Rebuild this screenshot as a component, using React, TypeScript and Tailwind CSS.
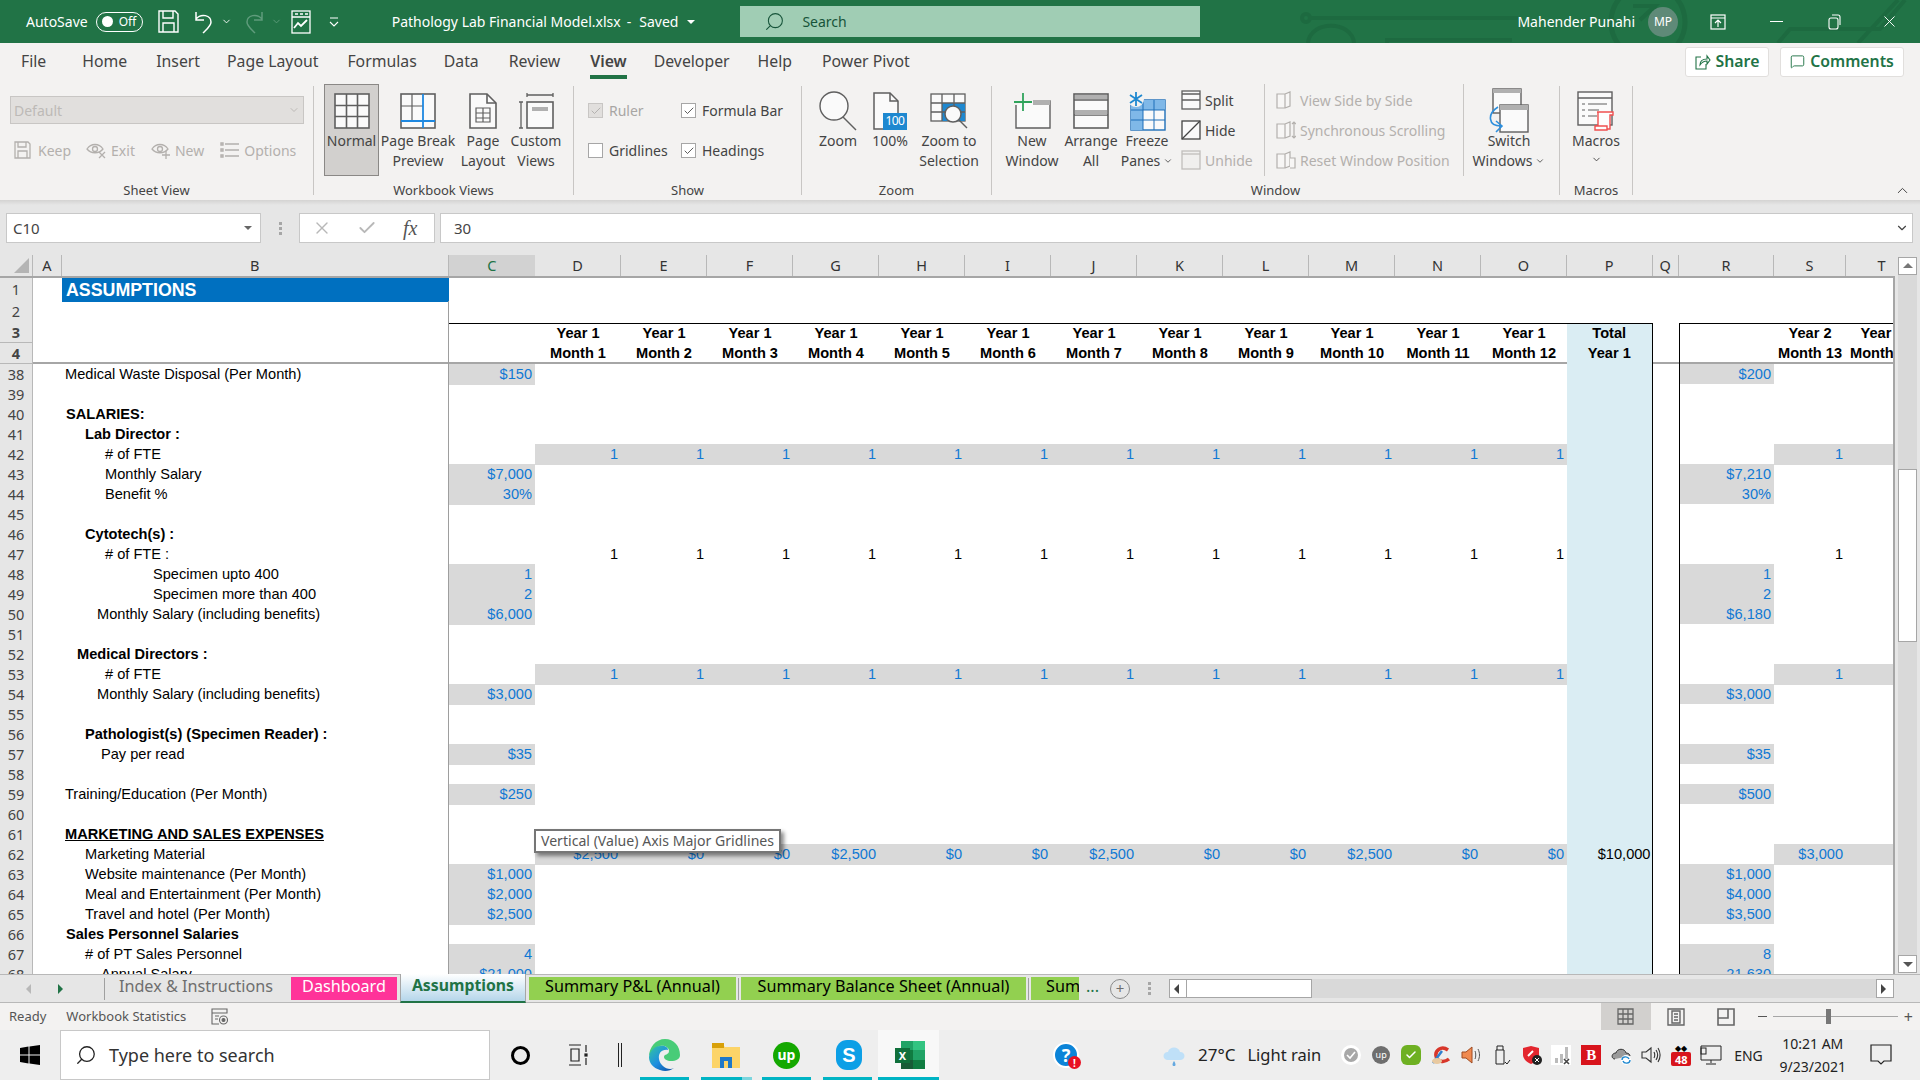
import { ChevronDown, ChevronUp, Search, X, Check, MessageSquare } from "lucide-react";
import type { ReactNode } from "react";

type MonthKind = "blue" | "black" | "money";

interface SheetRow {
  n: number;
  b?: string;
  pl?: string;
  bold?: boolean;
  under?: boolean;
  c?: string;
  r?: string;
  m?: MonthKind;
  p?: string;
  s?: string;
}

const GRID_COLS =
  "grid-cols-[33px_29px_386.5px_86.5px_repeat(12,86px)_85.5px_26.5px_95px_72px_72px]";
const BLUE = "text-[#0f78d4]";
const SHADE = "bg-[#d9d9d9]";
const MONEY = ["$2,500", "$0", "$0", "$2,500", "$0", "$0", "$2,500", "$0", "$0", "$2,500", "$0", "$0"];
const MONTH_COLS = ["D", "E", "F", "G", "H", "I", "J", "K", "L", "M", "N", "O"];

const rows: SheetRow[] = [
  { n: 38, b: "Medical Waste Disposal (Per Month)", pl: "pl-[3px]", c: "$150", r: "$200" },
  { n: 39 },
  { n: 40, b: "SALARIES:", pl: "pl-[4px]", bold: true },
  { n: 41, b: "Lab Director :", pl: "pl-[23px]", bold: true },
  { n: 42, b: "# of FTE", pl: "pl-[43px]", m: "blue", s: "1" },
  { n: 43, b: "Monthly Salary", pl: "pl-[43px]", c: "$7,000", r: "$7,210" },
  { n: 44, b: "Benefit %", pl: "pl-[43px]", c: "30%", r: "30%" },
  { n: 45 },
  { n: 46, b: "Cytotech(s) :", pl: "pl-[23px]", bold: true },
  { n: 47, b: "# of FTE :", pl: "pl-[43px]", m: "black", s: "1" },
  { n: 48, b: "Specimen upto 400", pl: "pl-[91px]", c: "1", r: "1" },
  { n: 49, b: "Specimen more than 400", pl: "pl-[91px]", c: "2", r: "2" },
  { n: 50, b: "Monthly Salary (including benefits)", pl: "pl-[35px]", c: "$6,000", r: "$6,180" },
  { n: 51 },
  { n: 52, b: "Medical Directors :", pl: "pl-[15px]", bold: true },
  { n: 53, b: "# of FTE", pl: "pl-[43px]", m: "blue", s: "1" },
  { n: 54, b: "Monthly Salary (including benefits)", pl: "pl-[35px]", c: "$3,000", r: "$3,000" },
  { n: 55 },
  { n: 56, b: "Pathologist(s) (Specimen Reader) :", pl: "pl-[23px]", bold: true },
  { n: 57, b: "Pay per read", pl: "pl-[39px]", c: "$35", r: "$35" },
  { n: 58 },
  { n: 59, b: "Training/Education (Per Month)", pl: "pl-[3px]", c: "$250", r: "$500" },
  { n: 60 },
  { n: 61, b: "MARKETING AND SALES EXPENSES", pl: "pl-[3px]", bold: true, under: true },
  { n: 62, b: "Marketing Material", pl: "pl-[23px]", m: "money", p: "$10,000", s: "$3,000" },
  { n: 63, b: "Website maintenance (Per Month)", pl: "pl-[23px]", c: "$1,000", r: "$1,000" },
  { n: 64, b: "Meal and Entertainment (Per Month)", pl: "pl-[23px]", c: "$2,000", r: "$4,000" },
  { n: 65, b: "Travel and hotel (Per Month)", pl: "pl-[23px]", c: "$2,500", r: "$3,500" },
  { n: 66, b: "Sales Personnel Salaries", pl: "pl-[4px]", bold: true },
  { n: 67, b: "# of PT Sales Personnel", pl: "pl-[23px]", c: "4", r: "8" },
  { n: 68, b: "Annual Salary", pl: "pl-[39px]", c: "$21,000", r: "21,630" },
];

function RowHead({ n }: { n: number }) {
  return (
    <div className="flex items-center justify-center border-r border-b border-[#b8b8b8] bg-[#e6e6e6] font-['Noto_Sans',sans-serif] text-[14.5px] text-[#444]">
      {n}
    </div>
  );
}

function Value({ v, shade, color = BLUE }: { v?: string; shade?: boolean; color?: string }) {
  return (
    <div className={`whitespace-nowrap pr-[3px] text-right ${color} ${shade ? SHADE : ""}`}>{v}</div>
  );
}

function DataRow({ row }: { row: SheetRow }) {
  const shaded = row.m === "blue" || row.m === "money";
  const months = row.m === "money" ? MONEY : row.m ? MONTH_COLS.map(() => "1") : MONTH_COLS.map(() => "");
  const monthColor = row.m === "black" ? "text-black" : BLUE;
  return (
    <div className={`grid h-[20px] ${GRID_COLS} text-[14.6px] leading-[20px] text-black`}>
      <RowHead n={row.n} />
      <div />
      <div
        className={`whitespace-nowrap border-r border-[#9e9e9e] ${row.pl ?? ""} ${row.bold ? "font-bold" : ""} ${row.under ? "underline" : ""}`}
      >
        {row.b}
      </div>
      <Value v={row.c} shade={!!row.c} />
      {months.map((v, i) => (
        <Value key={MONTH_COLS[i]} v={v} shade={shaded} color={monthColor} />
      ))}
      <div className="whitespace-nowrap border-r border-black bg-[#daedf3] pr-[1px] text-right">{row.p}</div>
      <div />
      <div className="border-l border-black">
        <Value v={row.r} shade={!!row.r} />
      </div>
      <Value v={row.s} shade={shaded} color={monthColor} />
      <div className={shaded ? SHADE : ""} />
    </div>
  );
}

function HeaderBand({ n, h, top, year, month }: { n: number; h: string; top?: boolean; year?: boolean; month?: boolean }) {
  const bar = top ? "border-t border-black" : "";
  const label = year ? "Year" : month ? "Month" : "";
  return (
    <div className={`grid ${h} ${GRID_COLS} text-[14.6px] font-bold ${top ? "leading-[19px]" : "leading-[20px]"} text-black`}>
      <RowHead n={n} />
      <div />
      <div className="border-r border-[#9e9e9e]" />
      <div className={bar} />
      {MONTH_COLS.map((col, i) => (
        <div key={col} className={`whitespace-nowrap text-center ${bar}`}>
          {label && `${label} ${year ? 1 : i + 1}`}
        </div>
      ))}
      <div className={`border-r border-black bg-[#daedf3] text-center ${bar}`}>{year ? "Total" : month ? "Year 1" : ""}</div>
      <div />
      <div className={`border-l border-black ${bar}`} />
      <div className={`whitespace-nowrap text-center ${bar}`}>{label && `${label} ${year ? 2 : 13}`}</div>
      <div className={`whitespace-nowrap text-center ${bar}`}>{label && `${label} ${year ? 2 : 14}`}</div>
    </div>
  );
}

function Sheet() {
  return (
    <div className="relative h-[696px] w-[1895px] overflow-hidden border-r-2 border-[#a6a6a6] bg-white font-['Liberation_Sans',Arial,sans-serif]">
      <div className="h-[86px] border-b-2 border-[#a6a6a6]">
        <div className={`grid h-[23px] ${GRID_COLS} text-black`}>
          <RowHead n={1} />
          <div />
          <div className="whitespace-nowrap bg-[#0070c0] pl-[4px] text-[17.8px] font-bold leading-[24px] text-white">ASSUMPTIONS</div>
        </div>
        <div className={`grid h-[22px] ${GRID_COLS}`}>
          <RowHead n={2} />
          <div />
          <div className="border-r border-[#9e9e9e]" />
        </div>
        <HeaderBand n={3} h="h-[20px]" top year />
        <HeaderBand n={4} h="h-[19px]" month />
      </div>
      {rows.map((row) => (
        <DataRow key={row.n} row={row} />
      ))}
      <div className="absolute left-[534px] top-[551px] whitespace-nowrap border-2 border-[#767676] bg-white px-[5px] font-['Noto_Sans',sans-serif] text-[14.1px] leading-[20px] text-[#575757] shadow-[3px_3px_4px_rgba(0,0,0,0.45)]">
        Vertical (Value) Axis Major Gridlines
      </div>
    </div>
  );
}

function ColumnHeaders() {
  const cols: [string, string][] = [
    ["A", "w-[29px]"],
    ["B", "w-[386.5px]"],
    ["C", "w-[86.5px]"],
    ...MONTH_COLS.map((c): [string, string] => [c, "w-[86px]"]),
    ["P", "w-[85.5px]"],
    ["Q", "w-[26.5px]"],
    ["R", "w-[95px]"],
    ["S", "w-[72px]"],
    ["T", "w-[72px]"],
  ];
  return (
    <div className="flex h-[23px] w-[1895px] overflow-hidden border-b-2 border-[#a6a6a6] bg-[#e6e6e6] text-[14.5px] text-[#333]">
      <div className="flex w-[33px] shrink-0 items-end justify-end border-r border-[#b8b8b8] pb-[3px] pr-[3px]">
        <svg width="15" height="15" viewBox="0 0 15 15"><path d="M15 0V15H0Z" fill="#b4b4b4" /></svg>
      </div>
      {cols.map(([c, w]) =>
        c === "C" ? (
          <div key={c} className={`-mb-[2px] flex shrink-0 items-center justify-center border-b-2 border-[#217346] bg-[#d2d2d2] text-[#217346] ${w}`}>
            {c}
          </div>
        ) : (
          <div key={c} className={`flex shrink-0 items-center justify-center border-r border-[#b8b8b8] ${w}`}>
            {c}
          </div>
        ),
      )}
    </div>
  );
}

function Tri({ dir, color = "#444" }: { dir: "l" | "r" | "u" | "d"; color?: string }) {
  const d = { l: "M7 1V11L2 6Z", r: "M2 1V11L7 6Z", u: "M1 8H11L6 3Z", d: "M1 4H11L6 9Z" }[dir];
  return (
    <svg width="12" height="12" viewBox="0 0 12 12"><path d={d} fill={color} /></svg>
  );
}

function VScroll() {
  return (
    <div className="flex h-[719px] w-[25px] flex-col bg-[#e6e6e6] pl-[3px] pt-[2px]">
      <div className="flex h-[18px] w-[19px] items-center justify-center border border-[#a6a6a6] bg-white">
        <Tri dir="u" color="#777" />
      </div>
      <div className="flex h-[680px] w-[19px] flex-col bg-[#d9d9d9] pt-[194px]">
        <div className="h-[173px] border border-[#a6a6a6] bg-white" />
      </div>
      <div className="flex h-[18px] w-[19px] items-center justify-center border border-[#a6a6a6] bg-white">
        <Tri dir="d" color="#555" />
      </div>
    </div>
  );
}

function TitleIcons() {
  return (
    <>
      <svg className="ml-[15px] shrink-0" width="21" height="23" viewBox="0 0 21 23" fill="none" stroke="#fff" strokeWidth="1.4">
        <path d="M1 1H17L20 4V22H1Z" />
        <path d="M5 1V8H15V1M5 22V13H16V22" />
      </svg>
      <svg className="ml-[15px] shrink-0" width="20" height="24" viewBox="0 0 20 24" fill="none" stroke="#fff" strokeWidth="1.5">
        <path d="M2 2V10H10M2 9C7 3 17 5 17 12C17 16 13 19 9 23" />
      </svg>
      <ChevronDown className="ml-[7px] shrink-0" size={11} color="#fff" />
      <svg className="ml-[12px] shrink-0" width="20" height="24" viewBox="0 0 20 24" fill="none" stroke="#5f9c7c" strokeWidth="1.5">
        <path d="M18 2V10H10M18 9C13 3 3 5 3 12C3 16 7 19 11 23" />
      </svg>
      <ChevronDown className="ml-[7px] shrink-0" size={11} color="#5f9c7c" />
      <svg className="ml-[9px] shrink-0" width="20" height="24" viewBox="0 0 20 24" fill="none" stroke="#fff" strokeWidth="1.3">
        <rect x="1" y="1" width="18" height="22" />
        <path d="M1 7H19M4 4H7M9 4H12M14 4H17" />
        <path d="M3 18L7 13L10 16L16 10" strokeWidth="1.8" />
      </svg>
      <svg className="ml-[17px] shrink-0" width="12" height="14" viewBox="0 0 12 14" fill="none" stroke="#fff" strokeWidth="1.1">
        <path d="M2 3H10M2 7L6 11L10 7" />
      </svg>
    </>
  );
}

function CircuitPattern() {
  return (
    <svg className="absolute left-0 top-0" width="1920" height="43" viewBox="0 0 1920 43" fill="none" stroke="#1d6a40" strokeWidth="4">
      <circle cx="1306" cy="18" r="4" />
      <path d="M1310 18H1518M1387 43V40H1512" />
      <path d="M1308 43C1310 20 1352 20 1354 43" />
      <circle cx="1648" cy="22" r="37" strokeWidth="5" />
      <path d="M1633 6H1655L1640 20M1655 6V18" />
      <path d="M1778 43L1790 29H1880L1905 0M1858 43L1898 0" />
    </svg>
  );
}

function TitleBar() {
  return (
    <div className="relative flex h-[43px] items-center bg-[#217346] text-white">
      <CircuitPattern />
      <div className="relative flex h-full w-full items-center">
        <span className="ml-[26px] text-[14px]">AutoSave</span>
        <div className="ml-[8px] flex h-[20px] w-[47px] shrink-0 items-center rounded-full border border-white pl-[5px] text-[12px]">
          <span className="h-[11px] w-[11px] rounded-full bg-white" />
          <span className="ml-[6px]">Off</span>
        </div>
        <TitleIcons />
        <span className="ml-[52px] whitespace-nowrap text-[14px]">Pathology Lab Financial Model.xlsx</span>
        <span className="ml-[6px] text-[14px]">-</span>
        <span className="ml-[8px] text-[14px]">Saved</span>
        <span className="ml-[9px] h-0 w-0 border-x-[4px] border-t-[4px] border-x-transparent border-t-white" />
        <div className="ml-[45px] flex h-[31px] w-[460px] shrink-0 items-center bg-[#a0cdb4] pl-[24px] text-[14px] text-[#17543a]">
          <Search className="-scale-x-100" size={21} strokeWidth={1.2} />
          <span className="ml-[17px]">Search</span>
        </div>
        <span className="ml-[317px] whitespace-nowrap text-[14px]">Mahender Punahi</span>
        <div className="ml-[13px] flex h-[30px] w-[30px] shrink-0 items-center justify-center rounded-full bg-[#5f8a78] text-[12px]">MP</div>
        <svg className="ml-[32px] shrink-0" width="16" height="16" viewBox="0 0 16 16" fill="none" stroke="#fff" strokeWidth="1.2">
          <rect x="1" y="1" width="14" height="14" />
          <path d="M1 4H15M8 13V6M5 9L8 6L11 9" />
        </svg>
        <span className="ml-[44px] h-[1px] w-[13px] shrink-0 bg-white" />
        <svg className="ml-[45px] shrink-0" width="13" height="16" viewBox="0 0 13 16" fill="none" stroke="#fff" strokeWidth="1.1">
          <rect x="1" y="4" width="9" height="11" rx="2" />
          <path d="M4 1H10C11 1 12 2 12 3V11" />
        </svg>
        <X className="ml-[39px] shrink-0" size={19} strokeWidth={1.2} />
      </div>
    </div>
  );
}

function RibbonTabs() {
  const tabs: [string, string][] = [
    ["File", "ml-[21px]"],
    ["Home", "ml-[36px]"],
    ["Insert", "ml-[29px]"],
    ["Page Layout", "ml-[27px]"],
    ["Formulas", "ml-[29px]"],
    ["Data", "ml-[27px]"],
    ["Review", "ml-[30px]"],
  ];
  const rest: [string, string][] = [
    ["Developer", "ml-[27px]"],
    ["Help", "ml-[28px]"],
    ["Power Pivot", "ml-[30px]"],
  ];
  return (
    <div className="flex h-[37px] items-center bg-[#f3f2f1] text-[15.8px] text-[#444]">
      {tabs.map(([t, m]) => (
        <span key={t} className={`whitespace-nowrap ${m}`}>{t}</span>
      ))}
      <span className="relative ml-[30px] font-semibold">
        View
        <span className="absolute -bottom-[6px] left-0 h-[4px] w-full bg-[#217346]" />
      </span>
      {rest.map(([t, m]) => (
        <span key={t} className={`whitespace-nowrap ${m}`}>{t}</span>
      ))}
      <div className="ml-auto flex h-[30px] w-[84px] shrink-0 items-center justify-center rounded-[3px] border border-[#e1dfdd] bg-white font-semibold text-[#217346]">
        <svg width="16" height="16" viewBox="0 0 16 16" fill="none" stroke="#217346" strokeWidth="1.1">
          <path d="M6 3H1V15H11V10" />
          <path d="M5 11C5 7 8 5 12 5V2L15 6L12 10V7C9 7 7 8 5 11Z" />
        </svg>
        <span className="ml-[5px]">Share</span>
      </div>
      <div className="ml-[11px] mr-[16px] flex h-[30px] w-[124px] shrink-0 items-center justify-center rounded-[3px] border border-[#e1dfdd] bg-white font-semibold text-[#217346]">
        <MessageSquare size={15} strokeWidth={1.5} />
        <span className="ml-[5px]">Comments</span>
      </div>
    </div>
  );
}

const S = "#5f5f5f";

function NormalIcon() {
  return (
    <svg width="36" height="36" viewBox="0 0 36 36" fill="#fafafa" stroke={S} strokeWidth="1.6">
      <rect x="1" y="1" width="34" height="34" />
      <path d="M12.5 1V35M23.5 1V35M1 12.5H35M1 23.5H35" fill="none" />
    </svg>
  );
}
function BreakIcon() {
  return (
    <svg width="36" height="36" viewBox="0 0 36 36" fill="#fafafa" stroke={S} strokeWidth="1.6">
      <rect x="1" y="1" width="34" height="34" />
      <path d="M12 1V28M1 13H23" fill="none" strokeWidth="1.2" />
      <path d="M23 1V35M1 28H35" fill="none" stroke="#1e88e0" strokeWidth="1.8" />
    </svg>
  );
}
function PageIcon() {
  return (
    <svg width="28" height="36" viewBox="0 0 28 36" fill="#fafafa" stroke={S} strokeWidth="1.6">
      <path d="M1 1H18L27 10V35H1Z" />
      <path d="M18 1V10H27" fill="none" />
      <path d="M7 15H21V29H7ZM7 20H21M7 25H21M14 15V29" fill="none" strokeWidth="1.2" />
    </svg>
  );
}
function CustomViewsIcon() {
  return (
    <svg width="36" height="38" viewBox="0 0 36 38" fill="none" stroke={S} strokeWidth="1.3">
      <path d="M9 1V5M35 1V5M9 3H35M1 10H5M1 36H5M3 10V36" />
      <rect x="9" y="10" width="26" height="26" fill="#fafafa" strokeWidth="1.6" />
      <rect x="14" y="15" width="16" height="4" fill="#b0b0b0" stroke="none" />
    </svg>
  );
}
function ZoomIcon() {
  return (
    <svg width="38" height="40" viewBox="0 0 38 40" fill="#fafafa" stroke={S} strokeWidth="1.4">
      <circle cx="15" cy="15" r="14" />
      <path d="M24 26L37 39" />
    </svg>
  );
}
function HundredIcon() {
  return (
    <div className="relative h-[38px] w-[34px]">
      <svg width="26" height="38" viewBox="0 0 26 38" fill="#fafafa" stroke={S} strokeWidth="1.5">
        <path d="M1 1H17L25 9V37H1Z" />
        <path d="M17 1V9H25" fill="none" />
      </svg>
      <div className="absolute bottom-0 right-0 flex h-[17px] w-[24px] items-center justify-center bg-[#1e88d0] text-[12px] leading-none tracking-tighter text-white">100</div>
    </div>
  );
}
function ZoomSelIcon() {
  return (
    <svg width="38" height="36" viewBox="0 0 38 36" fill="#fafafa" stroke={S} strokeWidth="1.3">
      <rect x="1" y="1" width="34" height="27" />
      <rect x="12" y="10" width="23" height="18" fill="#1e88d0" stroke="none" />
      <path d="M12 1V28M24 1V28M1 10H35M1 19H35" fill="none" />
      <circle cx="23" cy="21" r="8" strokeWidth="1.5" />
      <path d="M29 27L37 35" strokeWidth="1.5" />
    </svg>
  );
}
function NewWindowIcon() {
  return (
    <svg width="38" height="36" viewBox="0 0 38 36" fill="#fafafa" stroke={S} strokeWidth="1.4">
      <path d="M3 12V35H37V8H20" />
      <rect x="20" y="7" width="17" height="5" fill="#b0b0b0" stroke="none" />
      <path d="M10 0V18M1 9H19" fill="none" stroke="#2fa35b" strokeWidth="1.8" />
    </svg>
  );
}
function ArrangeIcon() {
  return (
    <svg width="36" height="36" viewBox="0 0 36 36" fill="#fafafa" stroke={S} strokeWidth="1.6">
      <rect x="1" y="1" width="34" height="34" />
      <path d="M1 7H35M1 22H35" fill="none" />
      <rect x="2" y="2" width="32" height="4" fill="#b0b0b0" stroke="none" />
      <rect x="2" y="17" width="32" height="5" fill="#b0b0b0" stroke="none" />
    </svg>
  );
}
function FreezeIcon() {
  return (
    <svg width="38" height="40" viewBox="0 0 38 40" fill="none">
      <rect x="3" y="9" width="34" height="30" fill="#fafafa" stroke="#1e6fb8" strokeWidth="1.4" />
      <rect x="3" y="9" width="34" height="10" fill="#7fb8e8" />
      <rect x="3" y="9" width="12" height="30" fill="#7fb8e8" />
      <path d="M15 9V39M26 9V39M3 19H37M3 29H37" stroke="#1e6fb8" strokeWidth="1" />
      <circle cx="8" cy="8" r="8" fill="#f3f2f1" />
      <path d="M8 1V15M2 4L14 12M14 4L2 12" stroke="#1e88d0" strokeWidth="1.8" />
    </svg>
  );
}
function SwitchIcon() {
  return (
    <svg width="40" height="46" viewBox="0 0 40 46" fill="#fafafa" stroke={S} strokeWidth="1.4">
      <rect x="4" y="1" width="28" height="24" />
      <rect x="4" y="1" width="28" height="4" fill="#b0b0b0" stroke="none" />
      <rect x="11" y="17" width="28" height="27" />
      <rect x="11" y="17" width="28" height="5" fill="#b0b0b0" stroke="none" />
      <path d="M9 19C-2 26 -1 38 12 38M7 33L13 38L7 44" fill="none" stroke="#2d8fdd" strokeWidth="1.6" />
    </svg>
  );
}
function MacrosIcon() {
  return (
    <svg width="38" height="40" viewBox="0 0 38 40" fill="#fafafa" stroke={S} strokeWidth="1.4">
      <rect x="1" y="1" width="34" height="33" />
      <path d="M1 7H35" fill="none" />
      <path d="M5 13H8M11 13H30M5 19H8M11 19H22M5 25H8M11 25H20" fill="none" strokeWidth="1.2" />
      <path d="M20 21H36V24H33V38H19V35H21V21Z" stroke="#ef4f4f" fill="#fdfdfd" />
      <path d="M18 35H30V39H18Z" stroke="#ef4f4f" fill="#fdfdfd" />
    </svg>
  );
}

function LargeButton({ icon, lines, w, active, caret }: { icon: ReactNode; lines: string[]; w: string; active?: boolean; caret?: boolean }) {
  return (
    <div className={`flex h-[92px] shrink-0 flex-col items-center pt-[5px] text-[14px] leading-[20px] text-[#444] ${w} ${active ? "border border-[#8a8886] bg-[#d2d0ce]" : "border border-transparent"}`}>
      <div className="flex h-[41px] items-center justify-center">{icon}</div>
      {lines.map((line, i) => (
        <span key={line} className="flex items-center whitespace-nowrap">
          {line}
          {caret && i === lines.length - 1 && <ChevronDown className="ml-[3px]" size={10} />}
        </span>
      ))}
    </div>
  );
}

function Group({ w, label, children }: { w: string; label: string; children: ReactNode }) {
  return (
    <div className={`relative h-[109px] shrink-0 border-r border-[#c8c6c4] ${w}`}>
      {children}
      <div className="absolute inset-x-0 bottom-[-4px] text-center text-[13px] leading-[18px] text-[#444]">{label}</div>
    </div>
  );
}

function SmallCheck({ on, dim, label }: { on?: boolean; dim?: boolean; label: string }) {
  return (
    <div className={`flex items-center text-[14px] ${dim ? "text-[#a8a6a4]" : "text-[#444]"}`}>
      <span className={`flex h-[15px] w-[15px] items-center justify-center border ${dim ? "border-[#c8c6c4] bg-[#e1dfdd]" : "border-[#a6a6a6] bg-white"}`}>
        {on && <Check size={12} strokeWidth={1.6} color={dim ? "#a8a6a4" : "#333"} />}
      </span>
      <span className="ml-[6px] whitespace-nowrap">{label}</span>
    </div>
  );
}

function SmallRow({ icon, label, dim }: { icon: ReactNode; label: string; dim?: boolean }) {
  return (
    <div className={`flex h-[30px] items-center whitespace-nowrap text-[14px] ${dim ? "text-[#b3b0ad]" : "text-[#444]"}`}>
      <span className="flex w-[24px] justify-center">{icon}</span>
      <span className="ml-[2px]">{label}</span>
    </div>
  );
}

function SplitIcon() {
  return (
    <svg width="20" height="20" viewBox="0 0 20 20" fill="#fafafa" stroke={S} strokeWidth="1.3">
      <rect x="1" y="1" width="18" height="18" />
      <path d="M1 10H19M1 4H19" fill="none" />
    </svg>
  );
}
function HideIcon() {
  return (
    <svg width="20" height="20" viewBox="0 0 20 20" fill="#fafafa" stroke="#444" strokeWidth="1.3">
      <rect x="1" y="1" width="18" height="18" />
      <path d="M1 19L19 1" fill="none" />
    </svg>
  );
}
function UnhideIcon() {
  return (
    <svg width="20" height="20" viewBox="0 0 20 20" fill="#f0efee" stroke="#c0bebc" strokeWidth="1.3">
      <rect x="1" y="1" width="18" height="18" />
      <path d="M1 4H19" fill="none" />
    </svg>
  );
}
function SideBySideIcon({ mark }: { mark?: "sync" | "reset" }) {
  return (
    <svg width="20" height="20" viewBox="0 0 20 20" fill="#f7f6f5" stroke="#b3b0ad" strokeWidth="1.2">
      <path d="M1 4H9V18H1ZM9 4L14 2V16L9 18" />
      {mark === "sync" && <path d="M18 2V18M16 4L18 2L20 4M16 16L18 18L20 16" fill="none" />}
      {mark === "reset" && <path d="M14 8H19V18H14" />}
    </svg>
  );
}

function Ribbon() {
  const gray = "#b3b0ad";
  return (
    <div className="flex h-[120px] bg-[#f3f2f1] pt-[6px]">
      <Group w="w-[314px]" label="Sheet View">
        <div className="ml-[10px] mt-[10px] flex h-[28px] w-[294px] items-center justify-between border border-[#c8c6c4] bg-[#e1dfdd] px-[3px] text-[14px] text-[#bdbab7]">
          Default
          <ChevronDown size={12} />
        </div>
        <div className="ml-[14px] mt-[12px] flex h-[28px] items-center text-[14px] text-[#b3b0ad]">
          <svg width="17" height="18" viewBox="0 0 17 18" fill="none" stroke={gray} strokeWidth="1.3"><path d="M1 1H14L16 3V17H1ZM4 1V6H12V1M4 17V10H13V17" /></svg>
          <span className="ml-[7px]">Keep</span>
          <svg className="ml-[15px]" width="20" height="18" viewBox="0 0 20 18" fill="none" stroke={gray} strokeWidth="1.3"><path d="M1 8C5 2 13 2 17 8C13 13 5 13 1 8Z" /><circle cx="9" cy="8" r="2.5" /><path d="M13 11L19 17M19 11L13 17" /></svg>
          <span className="ml-[5px]">Exit</span>
          <svg className="ml-[16px]" width="20" height="18" viewBox="0 0 20 18" fill="none" stroke={gray} strokeWidth="1.3"><path d="M1 8C5 2 13 2 17 8C13 13 5 13 1 8Z" /><circle cx="9" cy="8" r="2.5" /><path d="M15 10V18M11 14H19" /></svg>
          <span className="ml-[4px]">New</span>
          <svg className="ml-[16px]" width="19" height="16" viewBox="0 0 19 16" fill="none" stroke={gray} strokeWidth="1.4"><path d="M5 2H19M5 8H19M5 14H19M1 1H3V3H1ZM1 7H3V9H1ZM1 13H3V15H1Z" /></svg>
          <span className="ml-[5px]">Options</span>
        </div>
      </Group>
      <Group w="w-[260px]" label="Workbook Views">
        <div className="ml-[10px] -mt-[2px] flex">
          <LargeButton icon={<NormalIcon />} lines={["Normal"]} w="w-[55px]" active />
          <LargeButton icon={<BreakIcon />} lines={["Page Break", "Preview"]} w="w-[78px]" />
          <LargeButton icon={<PageIcon />} lines={["Page", "Layout"]} w="w-[52px]" />
          <LargeButton icon={<CustomViewsIcon />} lines={["Custom", "Views"]} w="w-[54px]" />
        </div>
      </Group>
      <Group w="w-[228px]" label="Show">
        <div className="ml-[14px] mt-[14px] grid grid-cols-[93px_120px] gap-y-[19px]">
          <SmallCheck on dim label="Ruler" />
          <SmallCheck on label="Formula Bar" />
          <SmallCheck label="Gridlines" />
          <SmallCheck on label="Headings" />
        </div>
      </Group>
      <Group w="w-[190px]" label="Zoom">
        <div className="ml-[14px] -mt-[2px] flex">
          <LargeButton icon={<ZoomIcon />} lines={["Zoom"]} w="w-[44px]" />
          <LargeButton icon={<HundredIcon />} lines={["100%"]} w="w-[60px]" />
          <LargeButton icon={<ZoomSelIcon />} lines={["Zoom to", "Selection"]} w="w-[58px]" />
        </div>
      </Group>
      <Group w="w-[568px]" label="Window">
        <div className="ml-[10px] -mt-[2px] flex">
          <LargeButton icon={<NewWindowIcon />} lines={["New", "Window"]} w="w-[60px]" />
          <LargeButton icon={<ArrangeIcon />} lines={["Arrange", "All"]} w="w-[58px]" />
          <LargeButton icon={<FreezeIcon />} lines={["Freeze", "Panes"]} w="w-[54px]" caret />
          <div className="ml-[5px] h-[92px] w-[86px] shrink-0 border-r border-[#c8c6c4] pt-[1px]">
            <SmallRow icon={<SplitIcon />} label="Split" />
            <SmallRow icon={<HideIcon />} label="Hide" />
            <SmallRow icon={<UnhideIcon />} label="Unhide" dim />
          </div>
          <div className="ml-[9px] h-[92px] w-[190px] shrink-0 border-r border-[#c8c6c4] pt-[1px]">
            <SmallRow icon={<SideBySideIcon />} label="View Side by Side" dim />
            <SmallRow icon={<SideBySideIcon mark="sync" />} label="Synchronous Scrolling" dim />
            <SmallRow icon={<SideBySideIcon mark="reset" />} label="Reset Window Position" dim />
          </div>
          <LargeButton icon={<SwitchIcon />} lines={["Switch", "Windows"]} w="w-[90px]" caret />
        </div>
      </Group>
      <Group w="w-[73px]" label="Macros">
        <div className="-mt-[2px] flex flex-col items-center">
          <LargeButton icon={<MacrosIcon />} lines={["Macros"]} w="w-[70px]" />
          <ChevronDown className="-mt-[22px] text-[#444]" size={11} />
        </div>
      </Group>
      <div className="flex flex-1 items-end justify-end pb-[1px] pr-[9px]">
        <ChevronUp size={17} strokeWidth={1.4} color="#444" />
      </div>
    </div>
  );
}

function FormulaBar() {
  return (
    <div className="bg-[#e6e6e6]">
      <div className="h-[5px] bg-gradient-to-b from-[#d4d3d2] to-[#e6e6e6]" />
      <div className="flex h-[50px] items-start pt-[8px] text-[15px] text-[#444]">
        <div className="ml-[6px] flex h-[30px] w-[255px] items-center justify-between border border-[#c8c8c8] bg-white pl-[6px] pr-[8px]">
          C10
          <span className="h-0 w-0 border-x-[4px] border-t-[4px] border-x-transparent border-t-[#666]" />
        </div>
        <div className="flex h-[30px] w-[38px] flex-col items-center justify-center gap-[2px]">
          <span className="h-[3px] w-[3px] bg-[#a6a6a6]" />
          <span className="h-[3px] w-[3px] bg-[#a6a6a6]" />
          <span className="h-[3px] w-[3px] bg-[#a6a6a6]" />
        </div>
        <div className="flex h-[30px] w-[136px] items-center border border-[#c8c8c8] bg-white text-[#b8b8b8]">
          <X className="ml-[12px]" size={20} strokeWidth={1.6} />
          <Check className="ml-[25px]" size={20} strokeWidth={2.2} />
          <span className="ml-[26px] font-['Liberation_Serif',serif] text-[20px] italic text-[#555]">fx</span>
        </div>
        <div className="ml-[5px] flex h-[30px] w-[1473px] items-center justify-between border border-[#c8c8c8] bg-white pl-[13px] pr-[3px]">
          30
          <ChevronDown size={14} />
        </div>
      </div>
    </div>
  );
}

function SheetTabs() {
  const sep = <span className="mx-[2px] h-[22px] w-[1px] shrink-0 bg-[#a0a0a0]" />;
  return (
    <div className="flex h-[29px] items-center border-y border-[#b8b8b8] bg-[#e6e6e6] text-[16.2px]">
      <div className="flex w-[102px] shrink-0 items-center pl-[24px]">
        <Tri dir="l" color="#b8b8b8" />
        <span className="ml-[20px]"><Tri dir="r" color="#217346" /></span>
      </div>
      {sep}
      <span className="w-[184px] shrink-0 pb-[4px] pr-[6px] text-center text-[#6e6e6e]">Index &amp; Instructions</span>
      <div className="flex h-[23px] w-[106px] shrink-0 items-center justify-center bg-[#ff3399] pb-[4px] text-white">Dashboard</div>
      <div className="mx-[3px] flex h-[29px] w-[126px] shrink-0 items-center justify-center border-x border-b-2 border-[#217346] border-x-[#a6a6a6] bg-gradient-to-b from-white to-[#b5d6ea] pb-[3px] text-[15.8px] font-bold text-[#217346]">Assumptions</div>
      <div className="flex h-[23px] w-[207px] shrink-0 items-center justify-center bg-[#92d050] pb-[4px] text-black">Summary P&amp;L (Annual)</div>
      {sep}
      <div className="flex h-[23px] w-[285px] shrink-0 items-center justify-center whitespace-nowrap bg-[#92d050] pb-[4px] text-black">Summary Balance Sheet (Annual)</div>
      {sep}
      <div className="flex h-[23px] w-[48px] shrink-0 items-center overflow-hidden whitespace-nowrap bg-[#92d050] pb-[4px] pl-[15px] text-black">Sum</div>
      <span className="ml-[7px] w-[20px] shrink-0 pb-[4px] text-[#217346]">...</span>
      <div className="ml-[4px] flex h-[20px] w-[20px] shrink-0 items-center justify-center rounded-full border border-[#8a8a8a] text-[15px] leading-none text-[#6e6e6e]">+</div>
      <div className="ml-[18px] flex h-[20px] w-[21px] shrink-0 flex-col items-start justify-center gap-[2px]">
        <span className="h-[3px] w-[3px] bg-[#a6a6a6]" />
        <span className="h-[3px] w-[3px] bg-[#a6a6a6]" />
        <span className="h-[3px] w-[3px] bg-[#a6a6a6]" />
      </div>
      <div className="flex h-[19px] w-[725px] shrink-0 bg-[#d9d9d9]">
        <div className="flex w-[18px] items-center justify-center border border-[#a6a6a6] bg-white"><Tri dir="l" /></div>
        <div className="w-[125px] border-y border-r border-[#a6a6a6] bg-white" />
        <div className="flex-1" />
        <div className="flex w-[18px] items-center justify-center border border-[#a6a6a6] bg-white"><Tri dir="r" /></div>
      </div>
    </div>
  );
}

function StatusBar() {
  return (
    <div className="flex h-[27px] items-center bg-[#f3f2f1] text-[13px] text-[#555]">
      <span className="ml-[9px]">Ready</span>
      <span className="ml-[20px] whitespace-nowrap">Workbook Statistics</span>
      <svg className="ml-[25px]" width="18" height="18" viewBox="0 0 18 18" fill="none" stroke="#666" strokeWidth="1.1">
        <path d="M1 1H16V5H1ZM1 5V16H8M4 8H8M4 11H7" />
        <circle cx="12.5" cy="12" r="4" />
        <circle cx="12.5" cy="12" r="1.5" fill="#666" />
      </svg>
      <div className="ml-auto flex h-full items-center">
        <div className="flex h-full w-[50px] items-center justify-center bg-[#d2d0ce]">
          <svg width="17" height="17" viewBox="0 0 17 17" fill="none" stroke="#666" strokeWidth="1.3"><path d="M1 1H16V16H1ZM6 1V16M11 1V16M1 6H16M1 11H16" /></svg>
        </div>
        <div className="flex h-full w-[50px] items-center justify-center">
          <svg width="18" height="18" viewBox="0 0 18 18" fill="none" stroke="#666" strokeWidth="1.4"><path d="M1 1H17V17H1ZM5 3H13V15H5ZM7 6H11M7 9H11M7 12H11" /></svg>
        </div>
        <div className="flex h-full w-[50px] items-center justify-center">
          <svg width="18" height="18" viewBox="0 0 18 18" fill="none" stroke="#666" strokeWidth="1.6"><path d="M1 1H17V17H1ZM11 1V10H1" /></svg>
        </div>
        <span className="ml-[7px] h-[1px] w-[9px] bg-[#555]" />
        <div className="ml-[6px] flex h-[15px] w-[125px] items-center">
          <span className="h-[1px] w-[53px] bg-[#a6a6a6]" />
          <span className="h-[15px] w-[5px] bg-[#777]" />
          <span className="h-[1px] w-[67px] bg-[#a6a6a6]" />
        </div>
        <span className="ml-[6px] mr-[7px] text-[16px] leading-none">+</span>
      </div>
    </div>
  );
}

function TaskSlot({ children, active, half }: { children: ReactNode; active?: boolean; half?: boolean }) {
  return (
    <div className={`relative flex h-full w-[61px] shrink-0 items-center justify-center ${active ? "bg-[#f8f8f8]" : ""}`}>
      {children}
      <span className={`absolute bottom-0 h-[3px] bg-[#00b4c4] ${active ? "inset-x-0" : half ? "left-[6px] w-[41px]" : "inset-x-[6px]"}`} />
      {half && <span className="absolute bottom-0 left-[47px] h-[3px] w-[10px] bg-[#7bd5de]" />}
    </div>
  );
}

function TrayIcons() {
  return (
    <div className="flex items-center">
      <span className="flex w-[30px] justify-center"><svg width="20" height="20" viewBox="0 0 20 20"><circle cx="10" cy="10" r="10" fill="#fff" /><circle cx="10" cy="10" r="7" fill="#a8a8a8" /><path d="M6 10L9 13L14 7" fill="none" stroke="#fff" strokeWidth="1.6" /></svg></span>
      <span className="flex w-[30px] justify-center"><span className="flex h-[18px] w-[18px] items-center justify-center rounded-full bg-[#6e6e6e] text-[9px] text-white">up</span></span>
      <span className="flex w-[30px] justify-center"><span className="flex h-[20px] w-[20px] items-center justify-center rounded-[6px] bg-[#6eb022]"><Check size={12} color="#fff" strokeWidth={3} /></span></span>
      <span className="flex w-[30px] justify-center"><svg width="20" height="20" viewBox="0 0 20 20" fill="none"><path d="M17 5C10 0 4 6 5 11C6 17 13 18 18 14" stroke="#d8362a" strokeWidth="3.5" /><path d="M2 18L11 6" stroke="#2d7fd0" strokeWidth="2.5" /><ellipse cx="6" cy="16" rx="5" ry="3" fill="#e8c9a0" /></svg></span>
      <span className="flex w-[30px] justify-center"><svg width="20" height="20" viewBox="0 0 20 20" fill="none"><path d="M1 7H5L11 2V18L5 13H1Z" fill="#f08a50" stroke="#a04a20" /><path d="M14 6C15 8 15 12 14 14M17 4C19 8 19 12 17 16" stroke="#555" /></svg></span>
      <span className="flex w-[32px] justify-center"><svg width="18" height="20" viewBox="0 0 18 20" fill="none" stroke="#222"><path d="M3 5H11V19H3ZM4 5V1H10V5" /><path d="M12 17L14 19L17 15" /></svg></span>
      <span className="flex w-[28px] justify-center"><svg width="21" height="20" viewBox="0 0 21 20"><path d="M1 3L9 1L17 3V10C17 14 13 17 9 19C5 17 1 14 1 10Z" fill="#e3262e" /><circle cx="15" cy="15" r="5" fill="#222" /><path d="M13 13L17 17M17 13L13 17" stroke="#fff" /><path d="M6 11L11 6" stroke="#fff" strokeWidth="2" /></svg></span>
      <span className="flex w-[30px] justify-center"><svg width="20" height="20" viewBox="0 0 20 20"><rect width="20" height="20" fill="#fff" /><rect x="4" y="13" width="3" height="5" fill="#bbb" /><rect x="9" y="9" width="3" height="9" fill="#bbb" /><rect x="14" y="2" width="3" height="12" fill="#bbb" /><path d="M13 14L18 19M18 14L13 19" stroke="#444" strokeWidth="1.6" /></svg></span>
      <span className="flex w-[30px] justify-center"><span className="flex h-[20px] w-[20px] items-center justify-center bg-[#d8141c] font-['Liberation_Serif',serif] text-[15px] font-bold leading-none text-white">B</span></span>
      <span className="flex w-[30px] justify-center"><svg width="21" height="20" viewBox="0 0 21 20" fill="none"><path d="M4 14C0 14 0 8 5 8C6 3 14 3 15 8C18 8 19 10 19 11" fill="#9a9a9a" stroke="#333" /><circle cx="15" cy="15" r="5" fill="#fff" /><path d="M11 15C11 11 17 11 18 14M19 15C19 19 13 19 12 16" stroke="#1e88d0" strokeWidth="1.4" /></svg></span>
      <span className="flex w-[30px] justify-center"><svg width="20" height="20" viewBox="0 0 20 20" fill="none" stroke="#333" strokeWidth="1.1"><path d="M1 7H5L10 3V17L5 13H1ZM13 7C14 9 14 11 13 13M15 5C17 8 17 12 15 15M17 3C20 8 20 12 17 17" /></svg></span>
      <span className="flex w-[30px] flex-col items-center"><span className="text-[8px] leading-[8px] text-black">◆◆</span><span className="flex h-[14px] w-[20px] items-center justify-center rounded-[2px] bg-[#d8141c] text-[11px] font-bold leading-none text-white">48</span></span>
      <span className="flex w-[30px] justify-center"><svg width="22" height="20" viewBox="0 0 22 20" fill="none" stroke="#222"><path d="M6 1H21V15H1V1H6M11 15V18M6 19H16" /><rect x="1" y="3" width="5" height="6" /></svg></span>
    </div>
  );
}

function Taskbar() {
  return (
    <div className="flex h-[50px] items-center bg-[#eeeeee] text-[#222]">
      <div className="flex h-full w-[60px] shrink-0 items-center justify-center">
        <svg width="20" height="20" viewBox="0 0 20 20" fill="#000"><path d="M0 3L8.5 1.6V9.5H0ZM9.5 1.4L20 0V9.5H9.5ZM0 10.5H8.5V18.4L0 17ZM9.5 10.5H20V20L9.5 18.6Z" /></svg>
      </div>
      <div className="flex h-full w-[430px] shrink-0 items-center border border-[#c8c8c8] bg-white pl-[14px] text-[18px]">
        <Search className="-scale-x-100" size={22} strokeWidth={1.4} />
        <span className="ml-[12px] text-[#333]">Type here to search</span>
      </div>
      <div className="flex h-full w-[60px] shrink-0 items-center justify-center">
        <span className="h-[19px] w-[19px] rounded-full border-[3px] border-black" />
      </div>
      <div className="flex h-full w-[56px] shrink-0 items-center justify-center">
        <svg width="20" height="22" viewBox="0 0 20 22" fill="none" stroke="#222" strokeWidth="1.2"><path d="M1 1H13M1 21H13M3 5H11V17H3ZM18 1V8M18 14V21" /><rect x="17" y="10" width="2" height="2" fill="#222" /></svg>
      </div>
      <div className="flex h-full w-[28px] shrink-0 items-center justify-center">
        <span className="h-[24px] w-[4px] border-x border-[#222]" />
      </div>
      <TaskSlot>
        <svg width="33" height="34" viewBox="0 0 33 34"><defs><linearGradient id="edge" x1="0" y1="0" x2="1" y2="1"><stop offset="0" stopColor="#33c6a0" /><stop offset="0.5" stopColor="#1e8fe0" /><stop offset="1" stopColor="#0b4aa0" /></linearGradient></defs><path d="M17 1C26 1 32 8 32 17C32 21 28 23 23 23C19 23 16 21 16 19C16 16 21 17 21 13C21 9 16 7 12 8C6 10 2 15 1 19C1 9 8 1 17 1Z" fill="#48cc78" /><path d="M1 19C2 12 7 8 12 8C16 7 20 9 20 12C14 11 10 15 11 21C12 28 20 33 26 30C22 33 17 34 12 32C5 30 1 25 1 19Z" fill="url(#edge)" /></svg>
      </TaskSlot>
      <TaskSlot half>
        <svg width="30" height="30" viewBox="0 0 30 30"><path d="M1 4H11L14 7H29V28H1Z" fill="#fcd468" /><rect x="1" y="3" width="12" height="5" fill="#d8a008" /><path d="M9 17H21V28H17V21H13V28H9Z" fill="#1e78c8" /></svg>
      </TaskSlot>
      <TaskSlot>
        <span className="flex h-[27px] w-[27px] items-center justify-center rounded-full bg-[#14a800] text-[14px] font-bold leading-none text-white">up</span>
      </TaskSlot>
      <TaskSlot>
        <span className="ml-[3px] flex h-[30px] w-[26px] items-center justify-center rounded-[11px] bg-[#0c9fe6] font-['Liberation_Sans',sans-serif] text-[20px] font-bold leading-none text-white">S</span>
      </TaskSlot>
      <TaskSlot active>
        <div className="relative ml-[3px] h-[28px] w-[30px]">
          <div className="ml-[6px] grid h-[28px] w-[24px] grid-cols-2 grid-rows-3">
            <span className="bg-[#21a366]" /><span className="bg-[#33c481]" />
            <span className="bg-[#107c41]" /><span className="bg-[#21a366]" />
            <span className="bg-[#185c37]" /><span className="bg-[#107c41]" />
          </div>
          <div className="absolute left-0 top-[7px] flex h-[15px] w-[15px] items-center justify-center bg-[#10703c] text-[11px] font-bold leading-none text-white">X</div>
        </div>
      </TaskSlot>
      <div className="relative ml-[114px] flex h-[26px] w-[26px] shrink-0 items-center justify-center rounded-full border-[2px] border-white bg-[#0c84d8] text-[18px] font-bold leading-none text-white">
        ?
        <span className="absolute -bottom-[3px] -right-[4px] flex h-[13px] w-[13px] items-center justify-center rounded-full bg-[#e81123] text-[10px] leading-none">!</span>
      </div>
      <svg className="ml-[82px]" width="26" height="26" viewBox="0 0 26 26"><path d="M7 18C1 18 1 10 7 10C8 4 18 4 19 10C25 10 25 18 19 18Z" fill="#bfe0f8" /><path d="M13 19C11 22 11 24 13 24C15 24 15 22 13 19Z" fill="#64a8e0" /></svg>
      <span className="ml-[11px] text-[17px]">27°C</span>
      <span className="ml-[12px] whitespace-nowrap text-[16.5px]">Light rain</span>
      <div className="ml-[15px]"><TrayIcons /></div>
      <span className="ml-[8px] text-[14px]">ENG</span>
      <div className="ml-[14px] flex w-[72px] flex-col items-center whitespace-nowrap text-[14px] leading-[23px]">
        <span>10:21 AM</span>
        <span>9/23/2021</span>
      </div>
      <svg className="ml-[21px]" width="22" height="22" viewBox="0 0 22 22" fill="none" stroke="#222" strokeWidth="1.2"><path d="M1 1H21V17H14L11 20L8 17H1Z" /></svg>
    </div>
  );
}

export default function App() {
  return (
    <div className="flex h-[1080px] w-[1920px] flex-col overflow-hidden bg-white font-['Noto_Sans',sans-serif]">
      <TitleBar />
      <RibbonTabs />
      <Ribbon />
      <FormulaBar />
      <div className="flex h-[719px]">
        <div className="w-[1895px]">
          <ColumnHeaders />
          <Sheet />
        </div>
        <VScroll />
      </div>
      <SheetTabs />
      <StatusBar />
      <Taskbar />
    </div>
  );
}
